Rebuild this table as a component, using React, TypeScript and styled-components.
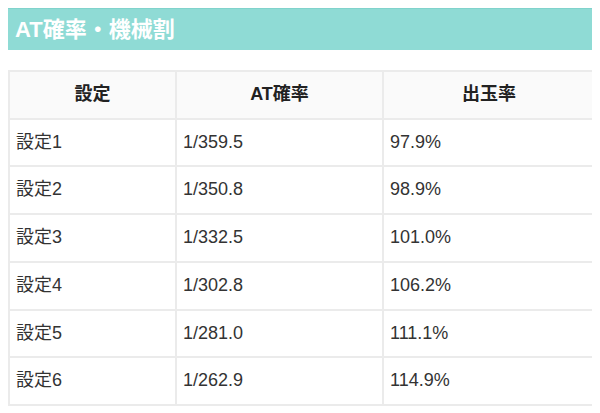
import React from 'react';
import styled, {createGlobalStyle} from "styled-components";

const GlobalStyle = createGlobalStyle`
  body {
    margin: 8px;
    background: #fff;
    font-family: "Liberation Sans", Arial, "Noto Sans CJK JP", sans-serif;
    color: #333;
  }
`

const Section = styled.section`
  width: 586px;
`

const Heading = styled.h2`
  margin: 0;
  padding: 6px 7px;
  background: #8fdbd5;
  border-top: 1px solid #80d3cc;
  color: #fff;
  font-size: 22px;
  font-weight: 700;
  line-height: 29px;
`

const Table = styled.table`
  width: 100%;
  margin-top: 20px;
  border-collapse: collapse;
  table-layout: fixed;
  font-size: 18px;
`

const Col = styled.col<{w: number}>`
  width: ${props => props.w}px;
`

const HeadCell = styled.th`
  background: #fafafa;
  border: 2px solid #ebebeb;
  padding: 9px 6px;
  line-height: 27.7px;
  font-weight: 700;
  color: #222;
  text-align: center;
`

const Cell = styled.td`
  border: 2px solid #ebebeb;
  padding: 9px 6px;
  line-height: 27.7px;
  color: #333;
  text-align: left;
`

const rows = [
    ["設定1", "1/359.5", "97.9%"],
    ["設定2", "1/350.8", "98.9%"],
    ["設定3", "1/332.5", "101.0%"],
    ["設定4", "1/302.8", "106.2%"],
    ["設定5", "1/281.0", "111.1%"],
    ["設定6", "1/262.9", "114.9%"],
]

export default function App() {
    return (
        <Section>
            <GlobalStyle />
            <Heading>AT確率・機械割</Heading>
            <Table>
                <colgroup>
                    <Col w={167} />
                    <Col w={207} />
                    <Col w={212} />
                </colgroup>
                <thead>
                    <tr>
                        <HeadCell>設定</HeadCell>
                        <HeadCell>AT確率</HeadCell>
                        <HeadCell>出玉率</HeadCell>
                    </tr>
                </thead>
                <tbody>
                    {rows.map(row => (
                        <tr key={row[0]}>
                            {row.map((value, i) => <Cell key={i}>{value}</Cell>)}
                        </tr>
                    ))}
                </tbody>
            </Table>
        </Section>
    );
}
